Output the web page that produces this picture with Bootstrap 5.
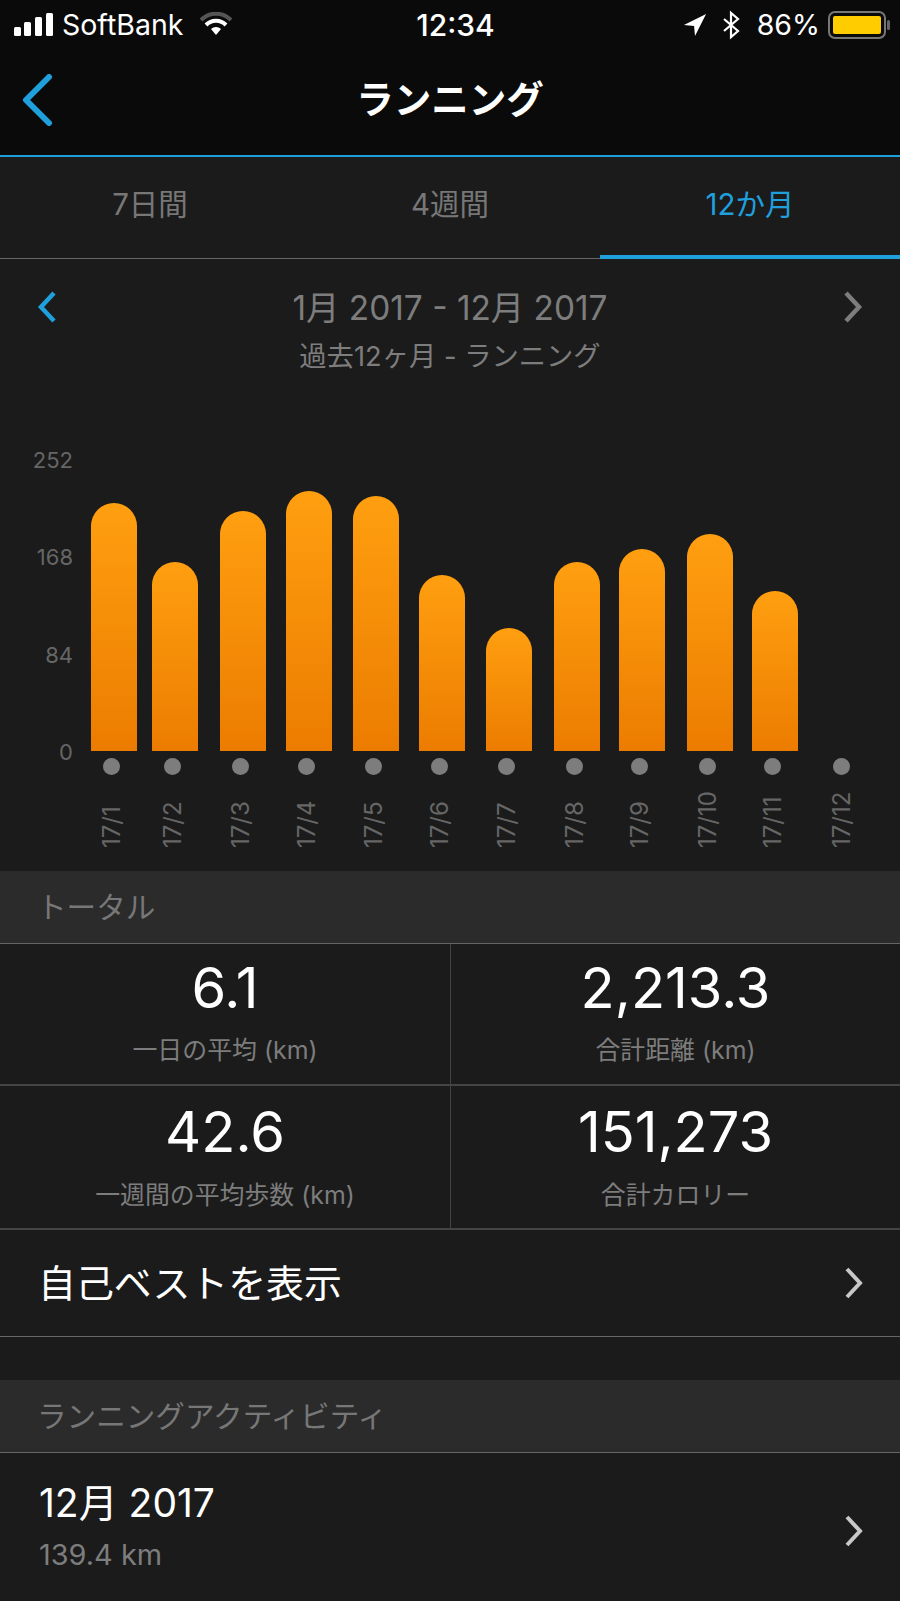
<!DOCTYPE html>
<html lang="ja"><head><meta charset="utf-8"><title>ランニング</title>
<link href="https://cdn.jsdelivr.net/npm/bootstrap@5.3.0/dist/css/bootstrap.min.css" rel="stylesheet">
<style>
html,body{background:#1b1b1b;margin:0}
body{width:900px;height:1601px;overflow:hidden;font-family:Inter,"Noto Sans CJK JP",sans-serif;color:#fff}
.topbar{height:155px;background:#0a0a0a}
.statusline{height:50px;padding:0 9px 0 14px;font-size:28.5px;line-height:50px}
.status-l,.status-r{width:340px}
.status-time{font-size:30px;font-weight:500;margin-left:6px}
.titleline{height:105px;padding:0 20px 5px}
.page-title{font-size:37.5px;font-weight:700;line-height:1;margin-left:-34px}
.accentline{height:2px;background:#1f9fdc}
.tabbar{height:102px;border-bottom:1px solid #666}
.tabitem{font-size:29.5px;color:#777;height:101px;line-height:94px;text-align:center;margin-bottom:-1px}
.tabitem.on{color:#1f9fdc;border-bottom:4px solid #1f9fdc;height:102px}
.datebar{height:120px;padding:0 36px;color:#7d7d7d}
.datechev{margin-top:20px}
.date-main{font-size:33.4px;line-height:40px;margin-top:29px}
.date-sub{font-size:27.3px;line-height:36px;margin-top:11px}
.chartzone{height:492px;padding-top:68px}
.yaxis{width:73px;height:318px;font-size:22px;line-height:26px;color:#666;text-align:right}
.plot{margin-left:18px;margin-top:1px}
.mcol{width:46px;flex:none}
.barbox{height:303px}
.onebar{width:46px;border-radius:23px 23px 0 0;background:linear-gradient(#ff9f10,#ec7c00)}
.mdot{width:17px;height:17px;border-radius:50%;background:#7d7d7d;margin:7px 0 0 -5px}
.mlabel{writing-mode:vertical-rl;transform:rotate(180deg);font-size:24px;line-height:24px;color:#666;height:62px;margin:11px 0 0 -5px;text-align:left}
.sechead{height:73px;background:#2b2b2b;border-bottom:1px solid #666;padding:0 37px;font-size:29.6px;line-height:72px;color:#777}
.statcell{height:142px;border-bottom:2px solid #444;text-align:center}
.statcell.low{height:144px}
.statcell.rgt{border-left:1px solid #444}
.statnum{font-size:56px;line-height:60px;padding-top:14px}
.low .statnum{padding-top:16px}
.statcap{font-size:24.9px;line-height:30px;margin-top:17px;color:#7d7d7d}
.low .statcap{margin-top:18px}
.linkrow{height:107px;border-bottom:1px solid #666;padding:0 36px 0 38px;font-size:37.9px}
.gaprow{height:43px}
.actrow{height:149px;border-bottom:1px solid #666;padding:0 36px 0 39px}
.act-t{font-size:39px;line-height:44px;font-weight:400}
.act-s{font-size:28.9px;line-height:36px;color:#7d7d7d;margin-top:12px}
.act-chev{margin-top:8px}
.loc{margin-right:6px}
.pct{margin-left:8px}
</style></head>
<body>
<div class="topbar">
 <div class="statusline d-flex justify-content-between align-items-center">
  <div class="status-l d-flex align-items-center gap-2">
   <svg width="40" height="24" viewBox="0 0 40 24" fill="#fff"><rect x="0" y="14" width="7" height="9" rx="1.5"/><rect x="10" y="9" width="7" height="14" rx="1.5"/><rect x="21" y="4" width="7" height="19" rx="1.5"/><rect x="32" y="0" width="7" height="23" rx="1.5"/></svg>
   <span>SoftBank</span>
   <svg class="ms-2" width="34" height="26" viewBox="0 0 34 26"><path d="M2 8a21 21 0 0 1 30 0" fill="none" stroke="#555" stroke-width="4"/><path d="M7 13a14 14 0 0 1 20 0" fill="none" stroke="#fff" stroke-width="4"/><path d="M12 17a7 7 0 0 1 10 0l-5 6z" fill="#fff"/></svg>
  </div>
  <div class="status-time">12:34</div>
  <div class="status-r d-flex align-items-center justify-content-end gap-2">
   <svg class="loc" width="24" height="24" viewBox="0 0 26 26" fill="#fff"><path d="M25 1 1 13l11 1 1 11z"/></svg>
   <svg width="20" height="32" viewBox="0 0 20 28" fill="none" stroke="#fff" stroke-width="2.2"><path d="M3 8l14 12-7 6V2l7 6L3 20"/></svg>
   <span class="pct">86%</span>
   <svg width="63" height="28" viewBox="0 0 63 28"><rect x="1" y="1" width="56" height="26" rx="6" fill="none" stroke="#777" stroke-width="2"/><rect x="5" y="5" width="48" height="18" rx="2" fill="#ffcc00"/><rect x="59" y="9" width="3" height="10" rx="1.5" fill="#666"/></svg>
  </div>
 </div>
 <div class="titleline d-flex align-items-center">
  <svg width="34" height="52" viewBox="0 0 34 52" fill="none" stroke="#1f9fdc" stroke-width="6" stroke-linecap="round" stroke-linejoin="round"><path d="M29 3 6 26l23 23"/></svg>
  <div class="page-title flex-grow-1 text-center">ランニング</div>
 </div>
</div>
<div class="accentline"></div>
<div class="tabbar row g-0">
 <div class="col-4 tabitem">7日間</div>
 <div class="col-4 tabitem">4週間</div>
 <div class="col-4 tabitem on">12か月</div>
</div>
<div class="datebar d-flex justify-content-between">
 <svg class="datechev" width="22" height="56" viewBox="0 0 22 56" fill="none" stroke="#1f9fdc" stroke-width="4.5"><path d="M18 14 5 28l13 14"/></svg>
 <div class="text-center"><div class="date-main">1月 2017 - 12月 2017</div><div class="date-sub">過去12ヶ月 - ランニング</div></div>
 <svg class="datechev" width="22" height="56" viewBox="0 0 22 56" fill="none" stroke="#7d7d7d" stroke-width="4.5"><path d="M4 14l13 14L4 42"/></svg>
</div>
<div class="chartzone d-flex">
 <div class="yaxis d-flex flex-column justify-content-between"><span>252</span><span>168</span><span>84</span><span>0</span></div>
 <div class="plot d-flex">
  <div class="mcol d-flex flex-column align-items-center" style="margin-left:0"><div class="barbox d-flex align-items-end"><div class="onebar" style="height:248px"></div></div><div class="mdot"></div><div class="mlabel">17/1</div></div>
  <div class="mcol d-flex flex-column align-items-center" style="margin-left:15px"><div class="barbox d-flex align-items-end"><div class="onebar" style="height:189px"></div></div><div class="mdot"></div><div class="mlabel">17/2</div></div>
  <div class="mcol d-flex flex-column align-items-center" style="margin-left:22px"><div class="barbox d-flex align-items-end"><div class="onebar" style="height:240px"></div></div><div class="mdot"></div><div class="mlabel">17/3</div></div>
  <div class="mcol d-flex flex-column align-items-center" style="margin-left:20px"><div class="barbox d-flex align-items-end"><div class="onebar" style="height:260px"></div></div><div class="mdot"></div><div class="mlabel">17/4</div></div>
  <div class="mcol d-flex flex-column align-items-center" style="margin-left:21px"><div class="barbox d-flex align-items-end"><div class="onebar" style="height:255px"></div></div><div class="mdot"></div><div class="mlabel">17/5</div></div>
  <div class="mcol d-flex flex-column align-items-center" style="margin-left:20px"><div class="barbox d-flex align-items-end"><div class="onebar" style="height:176px"></div></div><div class="mdot"></div><div class="mlabel">17/6</div></div>
  <div class="mcol d-flex flex-column align-items-center" style="margin-left:21px"><div class="barbox d-flex align-items-end"><div class="onebar" style="height:123px"></div></div><div class="mdot"></div><div class="mlabel">17/7</div></div>
  <div class="mcol d-flex flex-column align-items-center" style="margin-left:22px"><div class="barbox d-flex align-items-end"><div class="onebar" style="height:189px"></div></div><div class="mdot"></div><div class="mlabel">17/8</div></div>
  <div class="mcol d-flex flex-column align-items-center" style="margin-left:19px"><div class="barbox d-flex align-items-end"><div class="onebar" style="height:202px"></div></div><div class="mdot"></div><div class="mlabel">17/9</div></div>
  <div class="mcol d-flex flex-column align-items-center" style="margin-left:22px"><div class="barbox d-flex align-items-end"><div class="onebar" style="height:217px"></div></div><div class="mdot"></div><div class="mlabel">17/10</div></div>
  <div class="mcol d-flex flex-column align-items-center" style="margin-left:19px"><div class="barbox d-flex align-items-end"><div class="onebar" style="height:160px"></div></div><div class="mdot"></div><div class="mlabel">17/11</div></div>
  <div class="mcol d-flex flex-column align-items-center" style="margin-left:23px"><div class="barbox"></div><div class="mdot"></div><div class="mlabel">17/12</div></div>
 </div>
</div>
<div class="sechead">トータル</div>
<div class="row g-0">
 <div class="col-6 statcell"><div class="statnum">6.1</div><div class="statcap">一日の平均 (km)</div></div>
 <div class="col-6 statcell rgt"><div class="statnum">2,213.3</div><div class="statcap">合計距離 (km)</div></div>
 <div class="col-6 statcell low"><div class="statnum">42.6</div><div class="statcap">一週間の平均歩数 (km)</div></div>
 <div class="col-6 statcell low rgt"><div class="statnum">151,273</div><div class="statcap">合計カロリー</div></div>
</div>
<div class="linkrow d-flex justify-content-between align-items-center"><span>自己ベストを表示</span>
 <svg width="20" height="32" viewBox="0 0 20 32" fill="none" stroke="#c8c8c8" stroke-width="4"><path d="M3 2l13 14L3 30"/></svg></div>
<div class="gaprow"></div>
<div class="sechead">ランニングアクティビティ</div>
<div class="actrow d-flex justify-content-between align-items-center"><div><div class="act-t">12月 2017</div><div class="act-s">139.4 km</div></div>
 <svg class="act-chev" width="20" height="32" viewBox="0 0 20 32" fill="none" stroke="#c8c8c8" stroke-width="4"><path d="M3 2l13 14L3 30"/></svg></div>
<script src="https://cdn.jsdelivr.net/npm/bootstrap@5.3.0/dist/js/bootstrap.bundle.min.js"></script>
</body></html>
